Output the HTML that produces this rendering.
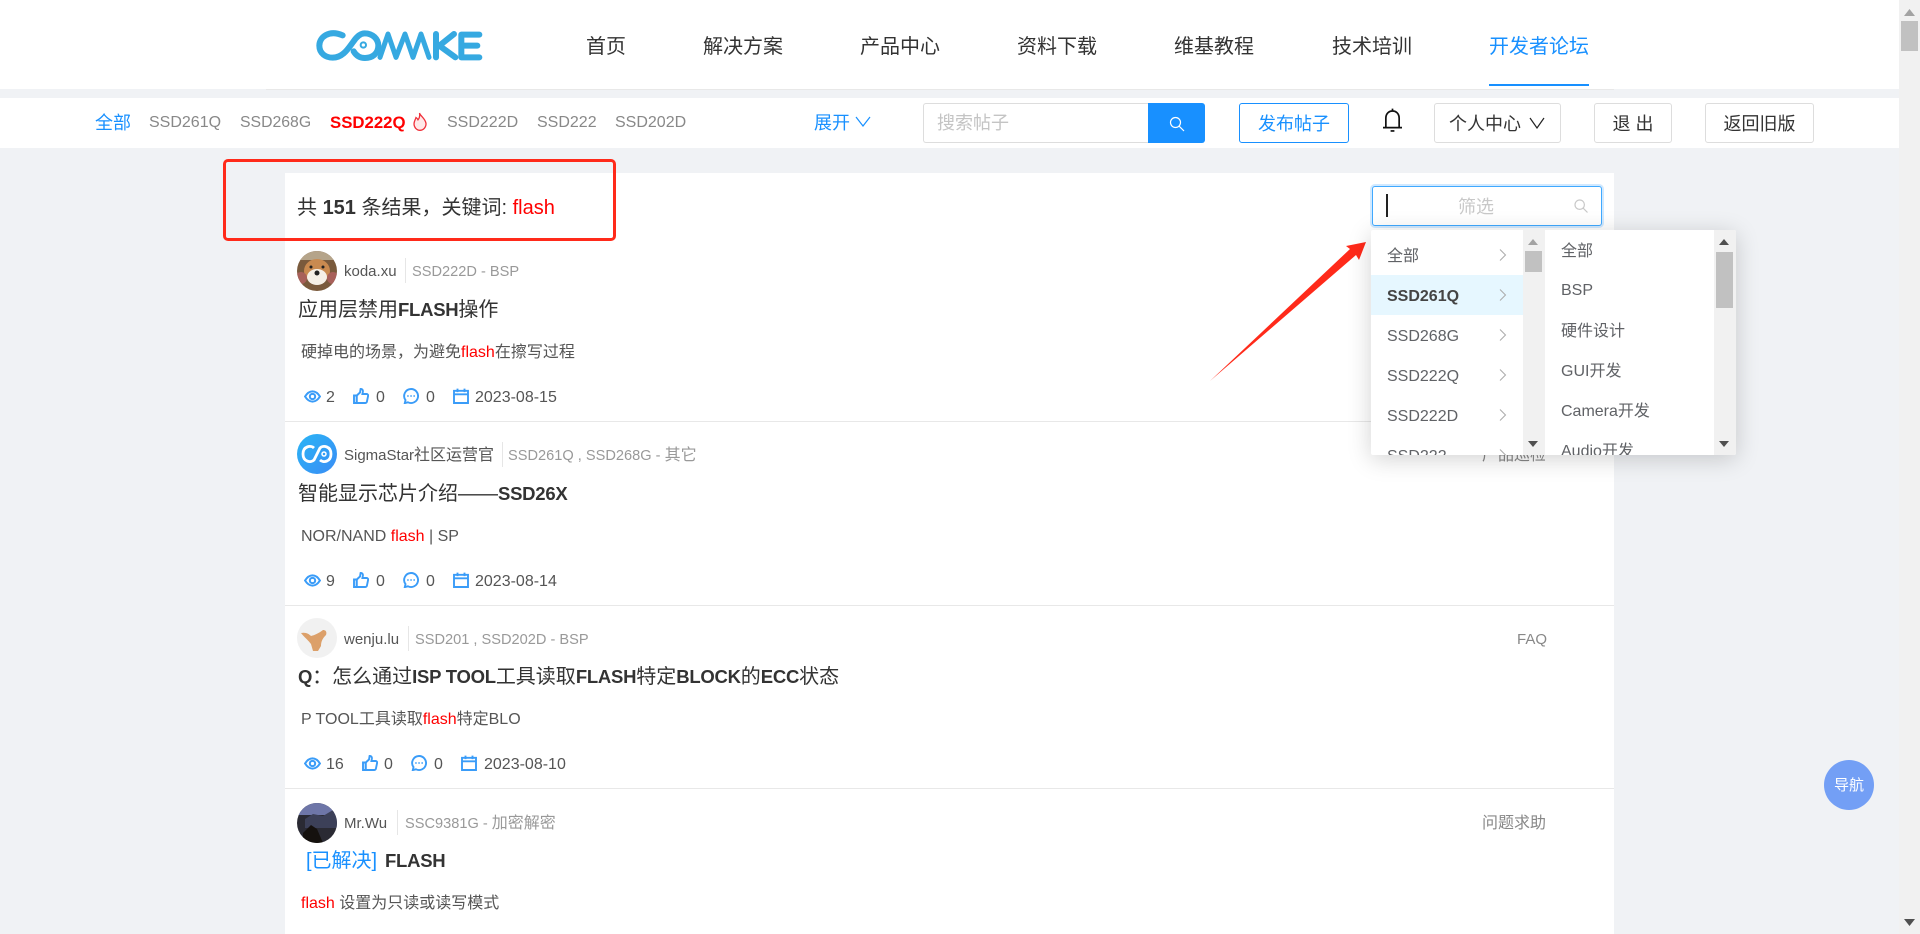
<!DOCTYPE html>
<html lang="zh"><head><meta charset="utf-8"><title>COMAKE 开发者论坛</title>
<style>
*{box-sizing:border-box}
html,body{margin:0;padding:0;width:1920px;height:934px;overflow:hidden;background:#f0f2f5;font-family:"Liberation Sans","Noto Sans CJK SC",sans-serif;color:#333}
.a{position:absolute}
.t{position:absolute;white-space:nowrap;line-height:30px;height:30px;margin-top:1px}
.nav{font-size:20px;color:#333;top:31px}
.sub{font-size:16px;color:#888;top:107px}
.btn{position:absolute;top:103px;height:40px;border:1px solid #ddd;border-radius:3px;background:#fff;font-size:18px;line-height:41px;text-align:center;color:#333;white-space:nowrap}
.name{font-size:15px;color:#555}
.name span,.tag span{font-size:16px}
.tag{font-size:14.600px;color:#999}
.ttl{font-size:20px;color:#333}
.ttl b{font-size:18.500px;letter-spacing:-.25px}
.desc{font-size:16px;color:#555}
.desc i,.r{color:#f00;font-style:normal}
.st{font-size:16px;color:#555}
.sep{position:absolute;width:1px;background:#e6e6e6;height:25px}
.hr{position:absolute;left:285px;width:1329px;height:1px;background:#e8e8e8}
.side{font-size:16px;color:#888;text-align:right}
.dd{font-size:16px;color:#606266}
.ic{position:absolute;fill:none;stroke:#3a9cf8;stroke-width:1.900}
</style></head><body>
<svg width="0" height="0" style="position:absolute"><defs>
<symbol id="eye" viewBox="0 0 16 16"><path d="M1 8C3 4.800 5.300 3.200 8 3.200s5 1.600 7 4.800c-2 3.200-4.300 4.800-7 4.800S3 11.200 1 8z"/><circle cx="8" cy="8" r="2.500"/></symbol>
<symbol id="like" viewBox="0 0 16 16"><path d="M1 7.500h2.800v7.500H1z" fill="#cfe8ff"/><path d="M3.800 7.500 7 4.500 7.600 1c1.600-.2 2.400 1 2.300 2.500L9.400 6h4.200c1 0 1.700.9 1.500 1.900l-1.200 5.800c-.2.800-.8 1.300-1.600 1.300H3.800"/></symbol>
<symbol id="msg" viewBox="0 0 16 16"><path d="M8 1a7 7 0 1 1-3 13.300l-3.200.8.700-3A7 7 0 0 1 8 1z"/><path d="M4.300 8h1.300M7.400 8h1.300M10.500 8h1.300" stroke-width="1.700"/></symbol>
<symbol id="cal" viewBox="0 0 16 16"><path d="M1 2.800h14V15H1zM1 6.300h14M4.500 .6v3.500M11.500 .6v3.500"/></symbol>
<symbol id="chev" viewBox="0 0 8 14"><path d="M1 1.500l5.500 5.500L1 12.500" fill="none" stroke="#aaa" stroke-width="1"/></symbol>
</defs></svg>

<!-- top header -->
<div class="a" style="left:0;top:0;width:1899px;height:89px;background:#fff"></div>
<div class="a" style="left:266px;top:89px;width:1348px;height:1px;background:#e8e8e8"></div>
<svg class="a" style="left:300px;top:20px" width="200" height="50" viewBox="0 0 600 150" fill="none" stroke="#36a9e1" stroke-width="18" stroke-linecap="round" stroke-linejoin="round"><title>COMAKE</title>
<path d="M128 46C86 28 58 52 58 77c0 24 20 36 40 36 32 0 48-30 62-48 10-15 20-25 34-25 24 0 41 17 41 37 0 24-18 37-40 37-16 0-27-8-34-20"/>
<circle cx="190" cy="75" r="8" stroke-width="6"/>
<path stroke-width="15" d="M240 112 264 42 288 112 315 42 339 112 363 42 387 112"/>
<path d="M408 42v70M462 42l-44 35 48 35M538 44h-54v68h54M484 77h48"/></svg>
<div class="t nav" style="left:586px">首页</div>
<div class="t nav" style="left:703px">解决方案</div>
<div class="t nav" style="left:860px">产品中心</div>
<div class="t nav" style="left:1017px">资料下载</div>
<div class="t nav" style="left:1174px">维基教程</div>
<div class="t nav" style="left:1332px">技术培训</div>
<div class="t nav" style="left:1489px;color:#1890ff">开发者论坛</div>
<div class="a" style="left:1489px;top:84px;width:100px;height:2px;background:#1890ff"></div>

<!-- sub nav -->
<div class="a" style="left:0;top:98px;width:1899px;height:50px;background:#fff"></div>
<div class="t sub" style="left:95px;color:#1890ff;font-size:18px">全部</div>
<div class="t sub" style="left:149px">SSD261Q</div>
<div class="t sub" style="left:240px;font-size:15.800px">SSD268G</div>
<div class="t sub" style="left:330px;color:#f00;font-weight:bold;font-size:16.800px">SSD222Q</div>
<svg class="a" style="left:413px;top:112px" width="14" height="19" viewBox="0 0 14 19" fill="#ffe8e8" stroke="#f0303a" stroke-width="1.300"><path d="M6.500 1c.8 3 6 5.500 6.500 10.500.3 3.700-2.700 6.800-6 6.800s-6-3-6-6.300c0-2.800 1.500-4.500 2-6.500 1.300.8 2 2.300 2 2.300C6.500 6 7 3.500 6.500 1z"/></svg>
<div class="t sub" style="left:447px">SSD222D</div>
<div class="t sub" style="left:537px">SSD222</div>
<div class="t sub" style="left:615px">SSD202D</div>
<div class="t sub" style="left:814px;color:#1890ff;font-size:18px">展开</div>
<svg class="a" style="left:855px;top:116px" width="16" height="11" viewBox="0 0 16 11" fill="none" stroke="#1890ff" stroke-width="1.200"><path d="M1 1l7 9 7-9"/></svg>

<div class="a" style="left:923px;top:103px;width:226px;height:40px;border:1px solid #ddd;border-right:0;border-radius:3px 0 0 3px;background:#fff"></div>
<div class="t" style="left:937px;top:107px;font-size:18px;color:#c4c4c4">搜索帖子</div>
<div class="a" style="left:1148px;top:103px;width:57px;height:40px;background:#1890ff;border-radius:0 3px 3px 0"></div>
<svg class="a" style="left:1169px;top:116px" width="16" height="16" viewBox="0 0 16 16" fill="none" stroke="#fff" stroke-width="1.200"><circle cx="6.500" cy="6.500" r="5"/><path d="M10 10l5 5"/></svg>
<div class="btn" style="left:1239px;width:110px;border-color:#1890ff;color:#1890ff">发布帖子</div>
<svg class="a" style="left:1383px;top:108px" width="19" height="25" viewBox="0 0 20 25" fill="none" stroke="#111" stroke-width="1.800"><path d="M0 20h20M3 20V10c0-4.500 3-7.500 7-7.500s7 3 7 7.500v10M10 0v2.500"/><path d="M8 23.500h4" stroke-width="1.800"/></svg>
<div class="btn" style="left:1434px;width:127px;text-align:left;padding-left:14px">个人中心</div>
<svg class="a" style="left:1529px;top:117px" width="16" height="12" viewBox="0 0 16 12" fill="none" stroke="#222" stroke-width="1.200"><path d="M1 1l7 10 7-10"/></svg>
<div class="btn" style="left:1594px;width:78px">退 出</div>
<div class="btn" style="left:1705px;width:109px">返回旧版</div>

<!-- main panel -->
<div class="a" style="left:285px;top:173px;width:1329px;height:761px;background:#fff"></div>
<div class="t" style="left:297px;top:192px;font-size:20px;color:#333">共 <b>151</b> 条结果，关键词: <span class="r">flash</span></div>

<!-- filter input -->
<div class="a" style="left:1372px;top:186px;width:230px;height:40px;border:1px solid #40a9ff;border-radius:3px;background:#fff;box-shadow:0 0 0 2px rgba(24,144,255,.2)"></div>
<div class="a" style="left:1386px;top:194px;width:2px;height:23px;background:#222"></div>
<div class="t" style="left:1458px;top:191px;font-size:18px;color:#c8c8c8">筛选</div>
<svg class="a" style="left:1574px;top:199px" width="14" height="14" viewBox="0 0 14 14" fill="none" stroke="#c8c8c8" stroke-width="1.200"><circle cx="5.700" cy="5.700" r="4.700"/><path d="M9.200 9.200l4.300 4.300"/></svg>

<!-- item 1 -->
<svg class="a" style="left:297px;top:251px" width="40" height="40" viewBox="0 0 40 40"><defs><clipPath id="c"><circle cx="20" cy="20" r="20"/></clipPath></defs><g clip-path="url(#c)"><rect width="40" height="40" fill="#7a5a3c"/><rect y="0" width="40" height="9" fill="#b5a48a"/><ellipse cx="20" cy="20" rx="13" ry="12" fill="#c98a50"/><ellipse cx="20" cy="26" rx="10" ry="8" fill="#f5efe6"/><circle cx="20" cy="22" r="2.500" fill="#222"/><circle cx="14" cy="16" r="1.500" fill="#222"/><circle cx="26" cy="16" r="1.500" fill="#222"/><circle cx="4" cy="27" r="6" fill="#a8605a"/><circle cx="36" cy="27" r="6" fill="#a8605a"/></g></svg>
<div class="t name" style="left:344px;top:256px">koda.xu</div>
<div class="sep" style="left:405px;top:258px"></div>
<div class="t tag" style="left:412px;top:256px">SSD222D - BSP</div>
<div class="t ttl" style="left:298px;top:294px">应用层禁用<b>FLASH</b>操作</div>
<div class="t desc" style="left:301px;top:337px">硬掉电的场景，为避免<i>flash</i>在擦写过程</div>
<svg class="ic" style="left:304px;top:388px" width="17" height="17"><use href="#eye"/></svg>
<div class="t st" style="left:326px;top:382px">2</div>
<svg class="ic" style="left:353px;top:388px" width="16" height="16"><use href="#like"/></svg>
<div class="t st" style="left:376px;top:382px">0</div>
<svg class="ic" style="left:403px;top:388px" width="16" height="16"><use href="#msg"/></svg>
<div class="t st" style="left:426px;top:382px">0</div>
<svg class="ic" style="left:453px;top:388px" width="16" height="16"><use href="#cal"/></svg>
<div class="t st" style="left:475px;top:382px">2023-08-15</div>
<div class="hr" style="top:421px"></div>

<!-- item 2 -->
<svg class="a" style="left:297px;top:434px" width="40" height="40" viewBox="0 0 40 40"><defs><linearGradient id="g" x1="0" y1="0" x2="1" y2="1"><stop offset="0" stop-color="#2ab5f5"/><stop offset="1" stop-color="#3a8cf5"/></linearGradient></defs><circle cx="20" cy="20" r="20" fill="url(#g)"/><path d="M17 14c-3-3-11-2-11 6s8 9 11 6l6-12c3-3 11-2 11 6s-8 9-11 6" fill="none" stroke="#fff" stroke-width="2.800"/><circle cx="27" cy="20" r="2" fill="none" stroke="#fff" stroke-width="1.500"/></svg>
<div class="t name" style="left:344px;top:440px">SigmaStar<span>社区运营官</span></div>
<div class="sep" style="left:502px;top:442px"></div>
<div class="t tag" style="left:508px;top:440px">SSD261Q , SSD268G - <span>其它</span></div>
<div class="t ttl" style="left:298px;top:478px">智能显示芯片介绍——<b>SSD26X</b></div>
<div class="t desc" style="left:301px;top:521px">NOR/NAND <i>flash</i> | SP</div>
<svg class="ic" style="left:304px;top:572px" width="17" height="17"><use href="#eye"/></svg>
<div class="t st" style="left:326px;top:566px">9</div>
<svg class="ic" style="left:353px;top:572px" width="16" height="16"><use href="#like"/></svg>
<div class="t st" style="left:376px;top:566px">0</div>
<svg class="ic" style="left:403px;top:572px" width="16" height="16"><use href="#msg"/></svg>
<div class="t st" style="left:426px;top:566px">0</div>
<svg class="ic" style="left:453px;top:572px" width="16" height="16"><use href="#cal"/></svg>
<div class="t st" style="left:475px;top:566px">2023-08-14</div>
<div class="t side" style="left:1482px;top:440px">产品巡检</div>
<div class="hr" style="top:605px"></div>

<!-- item 3 -->
<svg class="a" style="left:297px;top:618px" width="40" height="40" viewBox="0 0 40 40"><circle cx="20" cy="20" r="20" fill="#f1f1f1"/><path d="M4 15c5-1 8 1 10 3 4-1 8-3 12-6 3 0 4 2 3 5-3 3-5 6-5 11l-3 5h-5l-2-7C11 22 7 19 4 15z" fill="#dca06a"/></svg>
<div class="t name" style="left:344px;top:624px">wenju.lu</div>
<div class="sep" style="left:408px;top:626px"></div>
<div class="t tag" style="left:415px;top:624px">SSD201 , SSD202D - BSP</div>
<div class="t side" style="left:1517px;top:624px;font-size:15px">FAQ</div>
<div class="t ttl" style="left:298px;top:661px"><b>Q</b>：怎么通过<b>ISP TOOL</b>工具读取<b>FLASH</b>特定<b>BLOCK</b>的<b>ECC</b>状态</div>
<div class="t desc" style="left:301px;top:704px">P TOOL工具读取<i>flash</i>特定BLO</div>
<svg class="ic" style="left:304px;top:755px" width="17" height="17"><use href="#eye"/></svg>
<div class="t st" style="left:326px;top:749px">16</div>
<svg class="ic" style="left:362px;top:755px" width="16" height="16"><use href="#like"/></svg>
<div class="t st" style="left:384px;top:749px">0</div>
<svg class="ic" style="left:411px;top:755px" width="16" height="16"><use href="#msg"/></svg>
<div class="t st" style="left:434px;top:749px">0</div>
<svg class="ic" style="left:461px;top:755px" width="16" height="16"><use href="#cal"/></svg>
<div class="t st" style="left:484px;top:749px">2023-08-10</div>
<div class="hr" style="top:788px"></div>

<!-- item 4 -->
<svg class="a" style="left:297px;top:803px" width="40" height="40" viewBox="0 0 40 40"><defs><clipPath id="c4"><circle cx="20" cy="20" r="20"/></clipPath></defs><g clip-path="url(#c4)"><rect width="40" height="40" fill="#2a2a33"/><rect width="40" height="12" fill="#6e76a8"/><path d="M8 16l8-5 10 2 10-6 4 8v10H8z" fill="#3c4058"/><path d="M6 40V30l8-8 6 4 6 14z" fill="#15110e"/></g></svg>
<div class="t name" style="left:344px;top:808px">Mr.Wu</div>
<div class="sep" style="left:397px;top:810px"></div>
<div class="t tag" style="left:405px;top:808px">SSC9381G - <span>加密解密</span></div>
<div class="t side" style="left:1482px;top:808px">问题求助</div>
<div class="t ttl" style="left:306px;top:845px;color:#1890ff">[已解决]</div>
<div class="t ttl" style="left:385px;top:845px"><b>FLASH</b></div>
<div class="t desc" style="left:301px;top:888px"><i>flash</i> 设置为只读或读写模式</div>

<!-- annotation box -->
<div class="a" style="left:223px;top:159px;width:393px;height:82px;border:3.500px solid #ff2a1a;border-radius:5px"></div>
<svg class="a" style="left:0;top:0;pointer-events:none" width="1920" height="934"><polygon points="1210,381 1350,249 1346,246 1366,242 1359,260 1356,255" fill="#ff2a1a"/></svg>

<!-- cascader dropdown -->
<div class="a" style="left:1371px;top:230px;width:365px;height:225px;background:#fff;border-radius:2px;box-shadow:0 4px 24px rgba(0,0,0,.18);overflow:hidden">
  <div class="a" style="left:0;top:45px;width:152px;height:40px;background:#e6f7ff"></div>
  <div class="t dd" style="left:16px;top:11px">全部</div>
  <div class="t dd" style="left:16px;top:51px;font-weight:bold;color:#444">SSD261Q</div>
  <div class="t dd" style="left:16px;top:91px">SSD268G</div>
  <div class="t dd" style="left:16px;top:131px">SSD222Q</div>
  <div class="t dd" style="left:16px;top:171px">SSD222D</div>
  <div class="t dd" style="left:16px;top:211px">SSD222</div>
  <svg class="a" style="left:128px;top:18px" width="8" height="14"><use href="#chev"/></svg>
  <svg class="a" style="left:128px;top:58px" width="8" height="14"><use href="#chev"/></svg>
  <svg class="a" style="left:128px;top:98px" width="8" height="14"><use href="#chev"/></svg>
  <svg class="a" style="left:128px;top:138px" width="8" height="14"><use href="#chev"/></svg>
  <svg class="a" style="left:128px;top:178px" width="8" height="14"><use href="#chev"/></svg>
  <svg class="a" style="left:128px;top:218px" width="8" height="14"><use href="#chev"/></svg>
  <div class="a" style="left:152px;top:0;width:22px;height:225px;background:#f1f1f1"></div>
  <div class="a" style="left:154px;top:21px;width:17px;height:21px;background:#c1c1c1"></div>
  <svg class="a" style="left:157px;top:9px" width="10" height="6"><path d="M5 0l5 6H0z" fill="#a3a3a3"/></svg>
  <svg class="a" style="left:157px;top:211px" width="10" height="6"><path d="M0 0h10L5 6z" fill="#505050"/></svg>
  <div class="t dd" style="left:190px;top:6px">全部</div>
  <div class="t dd" style="left:190px;top:45px">BSP</div>
  <div class="t dd" style="left:190px;top:86px">硬件设计</div>
  <div class="t dd" style="left:190px;top:126px">GUI开发</div>
  <div class="t dd" style="left:190px;top:166px">Camera开发</div>
  <div class="t dd" style="left:190px;top:206px">Audio开发</div>
  <div class="a" style="left:343px;top:0;width:22px;height:225px;background:#f1f1f1"></div>
  <div class="a" style="left:345px;top:22px;width:17px;height:56px;background:#c1c1c1"></div>
  <svg class="a" style="left:348px;top:9px" width="10" height="6"><path d="M5 0l5 6H0z" fill="#505050"/></svg>
  <svg class="a" style="left:348px;top:211px" width="10" height="6"><path d="M0 0h10L5 6z" fill="#505050"/></svg>
</div>

<!-- floating nav -->
<div class="a" style="left:1824px;top:760px;width:50px;height:50px;border-radius:50%;background:#739ff5;color:#fff;font-size:15px;line-height:52px;text-align:center">导航</div>

<!-- page scrollbar -->
<div class="a" style="left:1899px;top:0;width:21px;height:934px;background:#f1f1f1"></div>
<div class="a" style="left:1901px;top:21px;width:17px;height:30px;background:#c1c1c1"></div>
<svg class="a" style="left:1904px;top:9px" width="11" height="7"><path d="M5.500 0l5.500 7H0z" fill="#a3a3a3"/></svg>
<svg class="a" style="left:1904px;top:919px" width="11" height="7"><path d="M0 0h11L5.500 7z" fill="#505050"/></svg>
</body></html>
